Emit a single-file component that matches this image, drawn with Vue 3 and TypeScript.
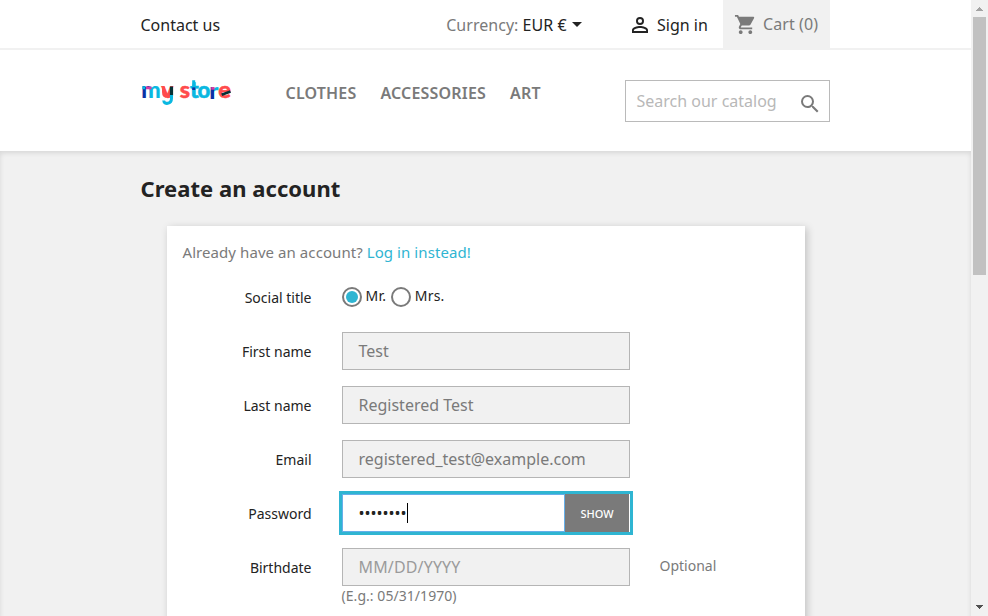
<script setup lang="ts">
import { ref } from 'vue'

interface Field {
  id: string
  label: string
  value?: string
  placeholder?: string
  hint?: string
  comment?: string
}

const categories = ['Clothes', 'Accessories', 'Art']
const titles = ['Mr.', 'Mrs.']
const selected = ref('Mr.')
const fields: Field[] = [
  { id: 'firstname', label: 'First name', value: 'Test' },
  { id: 'lastname', label: 'Last name', value: 'Registered Test' },
  { id: 'email', label: 'Email', value: 'registered_test@example.com' },
  { id: 'password', label: 'Password', value: '••••••••' },
  { id: 'birthday', label: 'Birthdate', placeholder: 'MM/DD/YYYY', hint: '(E.g.: 05/31/1970)', comment: 'Optional' },
]
</script>

<template>
  <div class="viewport">
    <div class="page">
      <header>
        <div class="topbar">
          <div class="container top-row">
            <a class="contact">Contact us</a>
            <div class="currency">Currency: <span>EUR €</span><i class="caret"></i></div>
            <a class="signin">
              <svg class="person" viewBox="0 0 16 16"><path fill="#232323" fill-rule="evenodd" d="M8 0a4 4 0 1 1 0 8 4 4 0 0 1 0-8Zm0 1.9a2.1 2.1 0 1 0 0 4.2 2.1 2.1 0 0 0 0-4.2ZM8 9c2.67 0 8 1.34 8 4v3H0v-3c0-2.66 5.33-4 8-4Zm0 1.9c-2.97 0-6.1 1.46-6.1 2.1v1.1h12.2V13c0-.64-3.13-2.1-6.1-2.1Z" /></svg>
              <span>Sign in</span>
            </a>
            <div class="cart">
              <svg class="trolley" viewBox="0 0 24 24"><path fill="#7a7a7a" d="M7 18c-1.1 0-1.99.9-1.99 2S5.9 22 7 22s2-.9 2-2-.9-2-2-2zM1 2v2h2l3.6 7.59-1.35 2.45c-.16.28-.25.61-.25.96 0 1.1.9 2 2 2h12v-2H7.42c-.14 0-.25-.11-.25-.25l.03-.12.9-1.63h7.45c.75 0 1.41-.41 1.75-1.03l3.58-6.49A1.003 1.003 0 0 0 20 4H5.21l-.94-2H1zm16 16c-1.1 0-1.99.9-1.99 2s.89 2 1.99 2 2-.9 2-2-.9-2-2-2z" /></svg>
              <span>Cart (0)</span>
            </div>
          </div>
        </div>
        <div class="container main-row">
          <svg class="logo" viewBox="0 -3 100 36" aria-label="my store">
            <defs>
              <linearGradient id="gm"><stop offset=".4" stop-color="#0a32a5" /><stop offset=".44" stop-color="#0ab8e1" /></linearGradient>
              <linearGradient id="gr"><stop offset=".48" stop-color="#0a32a5" /><stop offset=".5" stop-color="#0ab8e1" /></linearGradient>
            </defs>
            <g class="letters">
              <text x=".3" y="20.8" textLength="19.5" lengthAdjust="spacingAndGlyphs" fill="url(#gm)">m</text>
              <text x="20" y="20.8" textLength="12.5" lengthAdjust="spacingAndGlyphs" fill="#ff4c4c">y</text>
              <text x="38.7" y="21" textLength="10.3" lengthAdjust="spacingAndGlyphs" fill="#ff4c4c" stroke="#ff4c4c">s</text>
              <text x="49" y="21" textLength="8.8" lengthAdjust="spacingAndGlyphs" fill="#0ab8e1" stroke="#0ab8e1">t</text>
              <text x="56.6" y="21" textLength="12.8" lengthAdjust="spacingAndGlyphs" fill="#0ab8e1" stroke="#0ab8e1">o</text>
              <text x="68.3" y="21.5" textLength="9.3" lengthAdjust="spacingAndGlyphs" fill="url(#gr)">r</text>
              <text x="77.3" y="21" textLength="12.6" lengthAdjust="spacingAndGlyphs" fill="#ff4c4c" stroke="#ff4c4c">e</text>
            </g>
            <path d="M1.3 10.7h3M52.7 3.2v8" stroke="#0ab8e1" stroke-width="3" />
            <path d="M5 10.9h5.5M70.3 11.3h3.2" stroke="#d63ba5" stroke-width="2.8" />
            <path d="M51.2 11.7h3.1" stroke="#0a32a5" stroke-width="2.6" />
            <path d="M22.5 24.7l6-4.7" stroke="#fff" stroke-width="4" />
            <path d="M22.5 9.5v5.5c0 6 7.5 6 7.5 1" fill="none" stroke="#ff4c4c" stroke-width="3" />
            <path d="M30.5 9.5v9" stroke="#063236" stroke-width="3.2" />
            <path d="M30.5 18v3.2c0 6-7.5 6.8-7.8 2.3" fill="none" stroke="#0ab8e1" stroke-width="3" />
            <path d="M80.7 17.8 89.5 14.4" stroke="#063236" stroke-width="2.7" />
          </svg>
          <nav><a v-for="c in categories" :key="c">{{ c }}</a></nav>
          <div class="search">
            <span>Search our catalog</span>
            <svg class="glass" viewBox="3 3 18 18"><path fill="#7a7a7a" d="M15.5 14h-.79l-.28-.27A6.47 6.47 0 0 0 16 9.5 6.5 6.5 0 1 0 9.5 16c1.61 0 3.09-.59 4.23-1.57l.27.28v.79l5 4.99L20.49 19l-4.99-5zm-6 0C7.01 14 5 11.99 5 9.5S7.01 5 9.5 5 14 7.01 14 9.5 11.99 14 9.5 14z" /></svg>
          </div>
        </div>
      </header>
      <section class="wrapper">
        <div class="container">
          <h1>Create an account</h1>
          <div class="card">
            <p class="already">Already have an account? <a>Log in instead!</a></p>
            <div class="row">
              <label class="name">Social title</label>
              <div class="radios">
                <label v-for="t in titles" :key="t" class="radio" @click="selected = t">
                  <i class="dot" :class="{ on: selected === t }"></i><span>{{ t }}</span>
                </label>
              </div>
            </div>
            <div v-for="f in fields" :key="f.id" class="row">
              <label class="name">{{ f.label }}</label>
              <div class="control">
                <div v-if="f.id === 'password'" class="group">
                  <div class="secret"><span>{{ f.value }}</span><i class="cursor"></i></div>
                  <button type="button">Show</button>
                </div>
                <div v-else class="input" :class="{ empty: !f.value }">{{ f.value || f.placeholder }}</div>
                <div v-if="f.hint" class="hint">{{ f.hint }}</div>
              </div>
              <div class="comment">{{ f.comment }}</div>
            </div>
          </div>
        </div>
      </section>
    </div>
    <aside class="scrollbar">
      <svg class="arrow" viewBox="0 0 17 17"><path d="M8 7h1v1h1v1h1v1h1v1H5v-1h1V9h1V8h1z" fill="#a3a3a3" /></svg>
      <div class="thumb"></div>
      <svg class="arrow end" viewBox="0 0 17 17"><path d="M5 6h7v1h-1v1h-1v1H9v1H8V9H7V8H6V7H5z" fill="#505050" /></svg>
    </aside>
  </div>
</template>

<style>
body { overflow: hidden; }
</style>

<style scoped>
* { box-sizing: border-box; }
.viewport {
  display: flex;
  height: 616px;
  overflow: hidden;
  background: #fff;
  color: #7a7a7a;
  font-family: "Noto Sans", sans-serif;
  font-size: 16px;
}
.page { flex: 1; display: flex; flex-direction: column; min-width: 0; }
header { height: 151px; flex: none; }
.container { width: 690px; margin: 0 auto; }
.topbar { height: 50px; border-bottom: 2px solid #f1f1f1; }
.top-row { display: flex; align-items: center; height: 48px; white-space: nowrap; }
.top-row > * { line-height: 22px; padding-top: 2px; }
.contact { width: 305.7px; color: #232323; }
.currency { width: 185.8px; letter-spacing: 0.03px; }
.currency span { color: #232323; }
.caret {
  display: inline-block;
  margin-left: 5px;
  vertical-align: 4px;
  border: 5px solid transparent;
  border-top-color: #232323;
  border-bottom: 0;
}
.signin { display: flex; align-items: center; gap: 9px; width: 91px; color: #232323; }
.person { width: 16px; height: 16px; }
.top-row > .cart {
  display: flex;
  align-items: center;
  height: 50px;
  width: 107px;
  padding: 0 0 2px 11.5px;
  gap: 5.5px;
  align-self: flex-start;
  background: #f1f1f1;
}
.cart span { letter-spacing: 0.1px; }
.trolley { width: 23px; height: 23px; margin-top: 1px; }
.main-row { display: flex; padding-top: 30px; }
.logo { width: 100px; height: 36px; margin-top: -6px; overflow: visible; }
.letters { font: 900 22px Lato, sans-serif; stroke-width: 0.5px; }
nav { display: flex; gap: 24px; margin-left: 45px; width: 339px; line-height: 26px; font-weight: 600; letter-spacing: 0.18px; text-transform: uppercase; }
.search {
  display: flex;
  align-items: center;
  justify-content: space-between;
  width: 205px;
  height: 42px;
  padding: 0 9.6px 0 11px;
  border: 1px solid #bababa;
  color: #b8b8b8;
}
.glass { width: 18px; height: 18px; margin-top: 5px; }
.wrapper { flex: 1; padding-top: 25px; background: #f1f1f1; box-shadow: inset 0 2px 5px 0 rgba(0, 0, 0, 0.11); }
h1 { margin: 0 0 26px; line-height: 24px; height: 24px; font-size: 22px; font-weight: 700; letter-spacing: 0.04px; color: #232323; }
.card { margin: 0 25.4px 0 26px; height: 500px; padding: 15px 16px; background: #fff; box-shadow: 2px 2px 8px 0 rgba(0, 0, 0, 0.2); }
.already { margin: 0 0 15px; font-size: 15px; line-height: 22px; letter-spacing: 0.07px; }
.already a { color: #2fb5d2; }
.row { display: grid; grid-template-columns: 129px 288px 1fr; column-gap: 30px; height: 54px; font-size: 14px; line-height: 20px; }
.row .name { padding-top: 10px; text-align: right; color: #232323; }
.radios { display: flex; gap: 4.7px; height: 20px; margin-top: 9px; color: #232323; }
.radio { display: flex; gap: 4px; line-height: 18px; letter-spacing: 0.2px; }
.dot { width: 20px; height: 20px; padding: 2px; border: 2px solid #7a7a7a; border-radius: 50%; }
.dot.on::before { content: ""; display: block; width: 12px; height: 12px; border-radius: 50%; background: #2fb5d2; }
.input { height: 38px; padding: 0 16px; line-height: 36px; border: 1px solid #b5b5b5; background: #f1f1f1; font-size: 16px; }
.empty { color: #9b9b9b; letter-spacing: 0.15px; }
.group { display: flex; height: 38px; padding-right: 1px; outline: 3px solid #2fb5d2; background: #fff; }
.secret { display: flex; align-items: center; flex: 1; padding-left: 16px; border: 1px solid #66afe9; color: #232323; font-size: 16px; }
.cursor { width: 1px; height: 20px; background: #000; }
button { width: 64px; padding: 0 0 0 1px; border: 0; background: #7a7a7a; color: #fff; font: 500 11px "Noto Sans", sans-serif; text-transform: uppercase; }
.hint { line-height: 20px; letter-spacing: 0.05px; }
.comment { padding-top: 8px; }
.scrollbar { display: flex; flex-direction: column; width: 17px; background: #f1f1f1; }
.arrow { width: 17px; height: 17px; flex: none; }
.thumb { width: 13px; height: 258px; margin: 0 2px; background: #c1c1c1; }
.end { margin-top: auto; }
</style>
